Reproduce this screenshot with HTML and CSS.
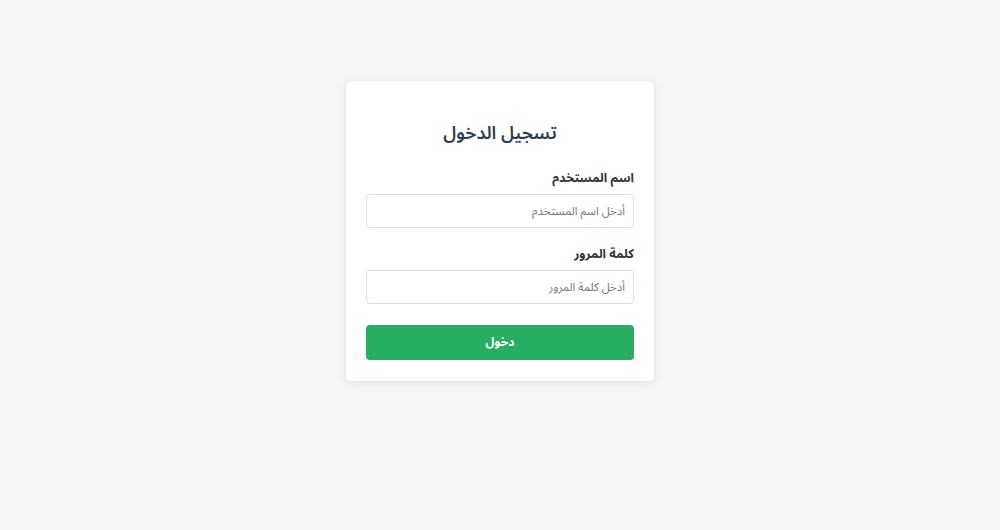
FILE: index.html
```html
<!DOCTYPE html>
<html lang="ar" dir="rtl">
<head>
  <meta charset="UTF-8">
  <meta name="viewport" content="width=device-width, initial-scale=1.0">
  <title>تسجيل الدخول</title>
  <link rel="stylesheet" href="styles.css">
</head>
<body>
  <div class="page">
    <form class="login-box">
      <h2>تسجيل الدخول</h2>
      <div class="field">
        <label for="username">اسم المستخدم</label>
        <input type="text" id="username" placeholder="أدخل اسم المستخدم">
      </div>
      <div class="field">
        <label for="password">كلمة المرور</label>
        <input type="password" id="password" placeholder="أدخل كلمة المرور">
      </div>
      <button type="submit" class="btn">دخول</button>
    </form>
  </div>
</body>
</html>
```

FILE: styles.css
```css
body {
  margin: 0;
  background: #f4f5f5;
  font-family: "Noto Sans Arabic", "Noto Sans", "DejaVu Sans", sans-serif;
  height: 100vh;
}
.page {
  display: flex;
  justify-content: center;
  padding-top: 81px;
}
.login-box {
  width: 268px;
  padding: 20px 20px 21px;
  background: #fff;
  border-radius: 6px;
  box-shadow: 0 2px 10px rgba(0,0,0,0.08);
}
.login-box h2 {
  margin: 17px 0 20px;
  font-size: 18px;
  line-height: 30px;
  text-align: center;
  color: #2c3e50;
  font-weight: 600;
}
.field {
  margin-bottom: 16px;
}
.field:last-of-type {
  margin-bottom: 21px;
}
.field label {
  display: block;
  margin-bottom: 6px;
  font-size: 12.5px;
  line-height: 20px;
  font-weight: 700;
  color: #333;
}
.field input {
  display: block;
  box-sizing: border-box;
  width: 100%;
  height: 34px;
  padding: 0 8px;
  border: 1px solid #ddd;
  border-radius: 4px;
  font-family: inherit;
  font-size: 11.5px;
  color: #333;
  background: #fff;
}
.field input::placeholder {
  color: #777;
}
.btn {
  display: block;
  width: 100%;
  height: 35px;
  border: none;
  border-radius: 4px;
  background: #27ae60;
  color: #fff;
  font-family: inherit;
  font-size: 12px;
  font-weight: 700;
  cursor: pointer;
}
```
